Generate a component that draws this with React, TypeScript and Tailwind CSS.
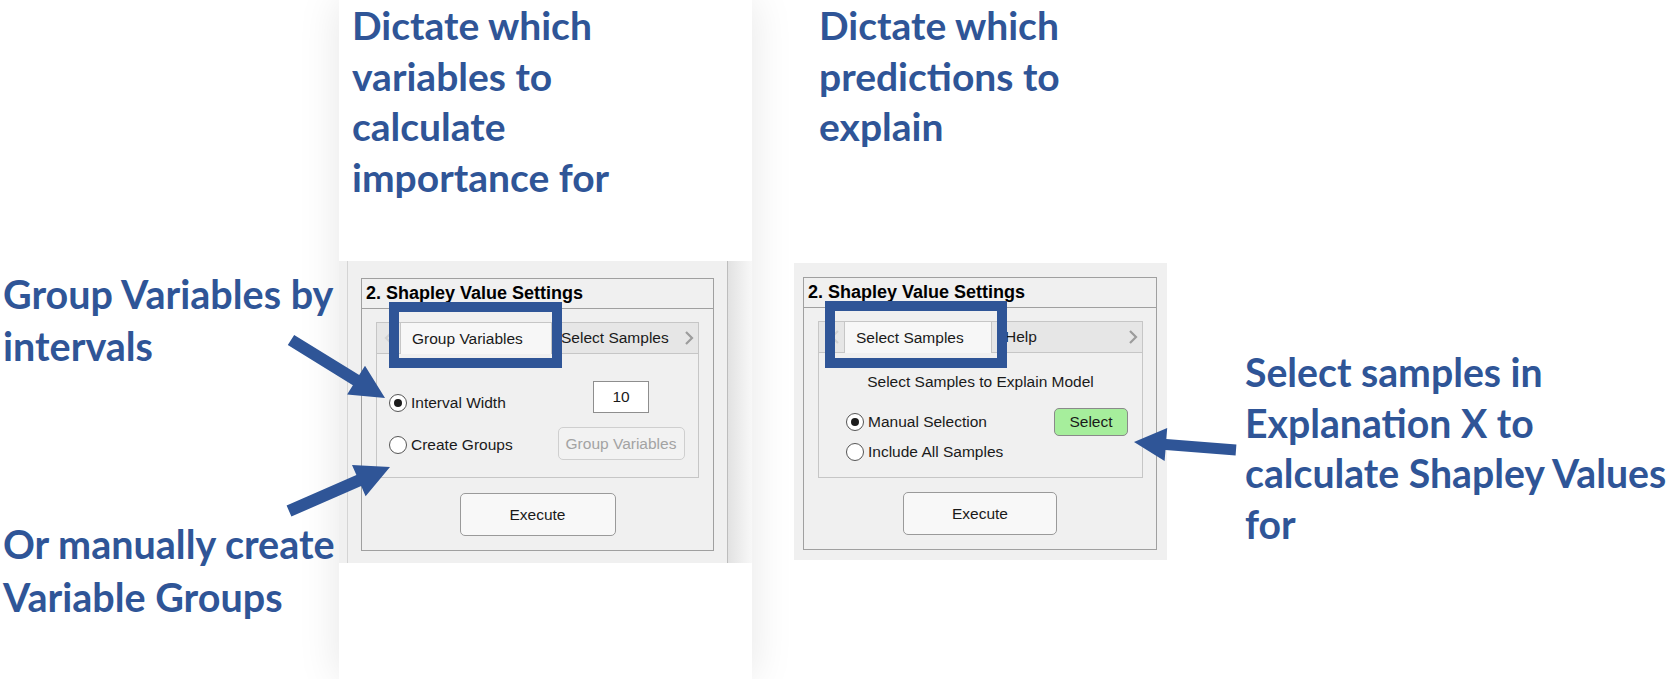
import React from "react";

const BLUE = "#2F5597";

function arrowPoints(x1: number, y1: number, x2: number, y2: number, sw: number, hl: number, hw: number) {
  const dx = x2 - x1;
  const dy = y2 - y1;
  const L = Math.hypot(dx, dy);
  const ux = dx / L;
  const uy = dy / L;
  const nx = -uy;
  const ny = ux;
  const bx = x2 - ux * hl;
  const by = y2 - uy * hl;
  const p = [
    [x1 + (nx * sw) / 2, y1 + (ny * sw) / 2],
    [bx + (nx * sw) / 2, by + (ny * sw) / 2],
    [bx + (nx * hw) / 2, by + (ny * hw) / 2],
    [x2, y2],
    [bx - (nx * hw) / 2, by - (ny * hw) / 2],
    [bx - (nx * sw) / 2, by - (ny * sw) / 2],
    [x1 - (nx * sw) / 2, y1 - (ny * sw) / 2],
  ];
  return p.map((q) => q.map((v) => v.toFixed(1)).join(",")).join(" ");
}

function Radio({ checked }: { checked?: boolean }) {
  return (
    <span className="w-[18px] h-[18px] rounded-full border-[1.5px] border-[#555555] bg-white flex items-center justify-center shrink-0">
      {checked && <span className="w-[8px] h-[8px] rounded-full bg-[#1c1c1c]" />}
    </span>
  );
}

function ChevronRight({ color }: { color: string }) {
  return (
    <svg width="10" height="16" viewBox="0 0 10 16">
      <polyline points="2,2 8,8 2,14" fill="none" stroke={color} strokeWidth="2.2" />
    </svg>
  );
}

function ChevronLeft({ color }: { color: string }) {
  return (
    <svg width="10" height="16" viewBox="0 0 10 16">
      <polyline points="8,2 2,8 8,14" fill="none" stroke={color} strokeWidth="2.2" />
    </svg>
  );
}

function Highlight({ className }: { className: string }) {
  return <div className={`absolute border-[10px] border-[#2F5597] pointer-events-none ${className}`} />;
}

function LeftPanel() {
  return (
    <div className="flex h-[302px]">
      <div className="w-[389px] h-full bg-[#F0F0F0] border-r border-[#BDBDBD] flex">
        <div className="w-[8px]" />
        <div className="w-px bg-[#D4D4D4]" />
        <div className="pl-[13px] pt-[17px]">
          <div className="w-[353px] h-[273px] border border-[#A0A0A0] flex flex-col">
            <div className="h-[30px] border-b border-[#A0A0A0] flex items-center pl-[4px] text-[18px] font-bold text-black">
              2. Shapley Value Settings
            </div>
            <div className="px-[14px] pt-[13px] flex flex-col">
              <div className="relative w-[323px] h-[156px] border border-[#C6C6C6] flex flex-col">
                <div className="h-[31px] border-b border-[#C6C6C6] bg-[#E6E6E6] flex items-stretch text-[15.5px]">
                  <div className="w-[23px] flex items-center justify-center">
                    <ChevronLeft color="#D2D2D2" />
                  </div>
                  <div className="w-[152px] -mb-px bg-[#F7F7F7] border-l border-r border-[#C6C6C6] flex items-center pl-[11px] text-[#1a1a1a]">
                    Group Variables
                  </div>
                  <div className="flex-1 flex items-center pl-[9px] text-[#1a1a1a] whitespace-nowrap">Select Samples</div>
                  <div className="flex items-center pr-[4px]">
                    <ChevronRight color="#9C9C9C" />
                  </div>
                </div>
                <div className="flex-1 bg-[#F0F0F0] flex text-[15.5px] text-[#1a1a1a]">
                  <div className="flex-1 pl-[12px] pt-[39px] flex flex-col gap-[22px]">
                    <div className="flex items-center gap-[4px] h-[20px]">
                      <Radio checked />
                      <span>Interval Width</span>
                    </div>
                    <div className="flex items-center gap-[4px] h-[20px]">
                      <Radio />
                      <span>Create Groups</span>
                    </div>
                  </div>
                  <div className="w-[141px] pr-[13px] pt-[27px] flex flex-col items-center gap-[14px]">
                    <div className="w-[56px] h-[32px] bg-white border border-[#8E8E8E] flex items-center justify-center">10</div>
                    <div className="w-[127px] h-[33px] rounded-[5px] border border-[#CFCFCF] bg-[#F2F2F2] flex items-center justify-center text-[#A3A3A3]">
                      Group Variables
                    </div>
                  </div>
                </div>
                <Highlight className="left-[12px] top-[-21px] w-[173px] h-[66px]" />
              </div>
              <div className="mt-[15px] mx-auto w-[156px] h-[43px] rounded-[5px] border border-[#9A9A9A] bg-[#F8F8F8] flex items-center justify-center text-[15.5px] text-[#1a1a1a]">
                Execute
              </div>
            </div>
          </div>
        </div>
      </div>
      <div className="w-[24px] h-full bg-gradient-to-r from-[#E2E2E2] to-[#F8F8F8]" />
    </div>
  );
}

function RightPanel() {
  return (
    <div className="w-[373px] h-[297px] bg-[#F0F0F0] pl-[9px] pt-[14px]">
      <div className="w-[354px] h-[273px] border border-[#A0A0A0] flex flex-col">
        <div className="h-[30px] border-b border-[#A0A0A0] flex items-center pl-[4px] text-[18px] font-bold text-black">
          2. Shapley Value Settings
        </div>
        <div className="px-[14px] pt-[13px] flex flex-col">
          <div className="relative w-[325px] h-[157px] border border-[#C6C6C6] flex flex-col">
            <div className="h-[31px] border-b border-[#C6C6C6] bg-[#E6E6E6] flex items-stretch text-[15.5px]">
              <div className="w-[25px] flex items-center justify-end pr-[4px]">
                <ChevronLeft color="#D0D0D0" />
              </div>
              <div className="w-[148px] -mb-px bg-[#F7F7F7] border-l border-r border-[#C6C6C6] flex items-center pl-[11px] text-[#1a1a1a]">
                Select Samples
              </div>
              <div className="flex-1 flex items-center pl-[13px] text-[#1a1a1a]">Help</div>
              <div className="flex items-center pr-[4px]">
                <ChevronRight color="#9C9C9C" />
              </div>
            </div>
            <div className="flex-1 bg-[#F0F0F0] flex flex-col text-[15.5px] text-[#1a1a1a]">
              <div className="pt-[20px] h-[38px] leading-[18px] text-center">Select Samples to Explain Model</div>
              <div className="mt-[17px] flex">
                <div className="flex-1 pl-[27px] pt-[5px] flex flex-col gap-[12px]">
                  <div className="flex items-center gap-[4px] h-[18px]">
                    <Radio checked />
                    <span>Manual Selection</span>
                  </div>
                  <div className="flex items-center gap-[4px] h-[18px]">
                    <Radio />
                    <span>Include All Samples</span>
                  </div>
                </div>
                <div className="pr-[14px]">
                  <div className="w-[74px] h-[28px] rounded-[5px] border border-[#8A8A8A] bg-[#A6EE9C] flex items-center justify-center">
                    Select
                  </div>
                </div>
              </div>
            </div>
            <Highlight className="left-[6px] top-[-21px] w-[182px] h-[67px]" />
          </div>
          <div className="mt-[14px] mx-auto w-[154px] h-[43px] rounded-[5px] border border-[#9A9A9A] bg-[#F8F8F8] flex items-center justify-center text-[15.5px] text-[#1a1a1a]">
            Execute
          </div>
        </div>
      </div>
    </div>
  );
}

export default function App() {
  const ann = "font-['Lato',sans-serif] font-bold text-[#2F5597] whitespace-nowrap";
  return (
    <div className="relative w-[1670px] h-[679px] bg-white overflow-hidden flex font-['Liberation_Sans',Arial,sans-serif]">
      {/* Column A: left annotations */}
      <div className={`relative z-20 w-[339px] pl-[3px] pt-[268px] flex flex-col text-[39.5px] leading-[52px] ${ann}`}>
        <div>Group Variables by</div>
        <div>intervals</div>
        <div className="mt-[145px] leading-[53px]">Or manually create</div>
        <div className="leading-[53px]">Variable Groups</div>
      </div>

      {/* Column B: white card */}
      <div className="relative z-10 w-[413px] h-full bg-white shadow-[0_0_40px_rgba(0,0,0,0.10)] flex flex-col">
        <div className={`h-[261px] pl-[13px] text-[39px] leading-[50.7px] ${ann}`}>
          <div>Dictate which</div>
          <div>variables to</div>
          <div>calculate</div>
          <div>importance for</div>
        </div>
        <LeftPanel />
      </div>

      <div className="w-[42px]" />

      {/* Column C */}
      <div className="w-[373px] flex flex-col">
        <div className={`h-[263px] pl-[25px] text-[39px] leading-[50.7px] ${ann}`}>
          <div>Dictate which</div>
          <div>predictions to</div>
          <div>explain</div>
        </div>
        <RightPanel />
      </div>

      {/* Column D */}
      <div className={`flex-1 pl-[78px] pt-[347px] text-[39.2px] leading-[50.5px] ${ann}`}>
        <div>Select samples in</div>
        <div>Explanation X to</div>
        <div>calculate Shapley Values</div>
        <div>for</div>
      </div>

      {/* Arrows overlay */}
      <svg className="absolute inset-0 z-30 pointer-events-none" width="1670" height="679" viewBox="0 0 1670 679">
        <polygon points={arrowPoints(291, 340, 385, 398, 12, 34, 34)} fill={BLUE} />
        <polygon points={arrowPoints(289, 511, 390, 467, 12, 34, 34)} fill={BLUE} />
        <polygon points={arrowPoints(1236, 450, 1134, 442, 11, 32, 33)} fill={BLUE} />
      </svg>
    </div>
  );
}
